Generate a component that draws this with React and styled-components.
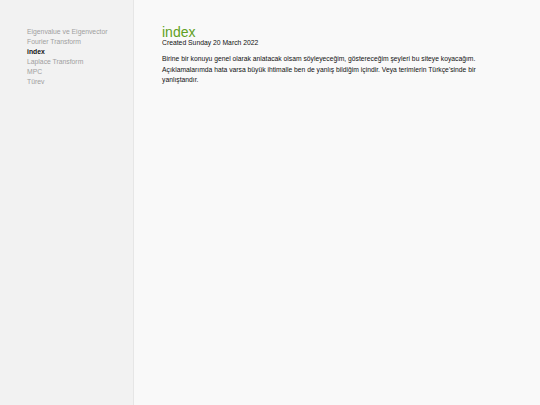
import React from "react";
import styled, { createGlobalStyle } from "styled-components";

const Global = createGlobalStyle`
  html, body { margin: 0; padding: 0; background: #f9f9f9; }
  body { font-family: "Liberation Sans", Arial, sans-serif; }
`;

const Layout = styled.div`
  display: flex;
  min-height: 405px;
  width: 540px;
`;

const Sidebar = styled.nav`
  width: 134px;
  flex: none;
  background: #f2f2f2;
  border-right: 1px solid #e6e6e6;
  padding: 27px 0 0 27px;
  box-sizing: border-box;
  display: flex;
  flex-direction: column;
`;

const NavItem = styled.a`
  font-size: 6.8px;
  line-height: 10px;
  color: ${(p) => (p.$active ? "#111" : "#a0a0a0")};
  font-weight: ${(p) => (p.$active ? "bold" : "normal")};
  text-decoration: none;
`;

const Main = styled.main`
  flex: 1;
  padding: 25px 0 0 28px;
  background: #f9f9f9;
`;

const Title = styled.h1`
  margin: 0;
  font-size: 14px;
  line-height: 14px;
  font-weight: normal;
  color: #5fa022;
`;

const Meta = styled.div`
  font-size: 6.8px;
  line-height: 8px;
  color: #111;
`;

const Para = styled.p`
  margin: 7px 0 0;
  width: 322px;
  font-size: 6.75px;
  line-height: 10.5px;
  color: #111;
`;

const items = [
  "Eigenvalue ve Eigenvector",
  "Fourier Transform",
  "index",
  "Laplace Transform",
  "MPC",
  "Türev",
];

export default function App() {
  return (
    <>
      <Global />
      <Layout>
        <Sidebar>
          {items.map((t) => (
            <NavItem key={t} href="#" $active={t === "index"}>
              {t}
            </NavItem>
          ))}
        </Sidebar>
        <Main>
          <Title>index</Title>
          <Meta>Created Sunday 20 March 2022</Meta>
          <Para>
            Birine bir konuyu genel olarak anlatacak olsam söyleyeceğim, göstereceğim şeyleri bu siteye koyacağım. Açıklamalarımda hata varsa büyük ihtimalle ben de yanlış bildiğim içindir. Veya terimlerin Türkçe'sinde bir yanlıştandır.
          </Para>
        </Main>
      </Layout>
    </>
  );
}
